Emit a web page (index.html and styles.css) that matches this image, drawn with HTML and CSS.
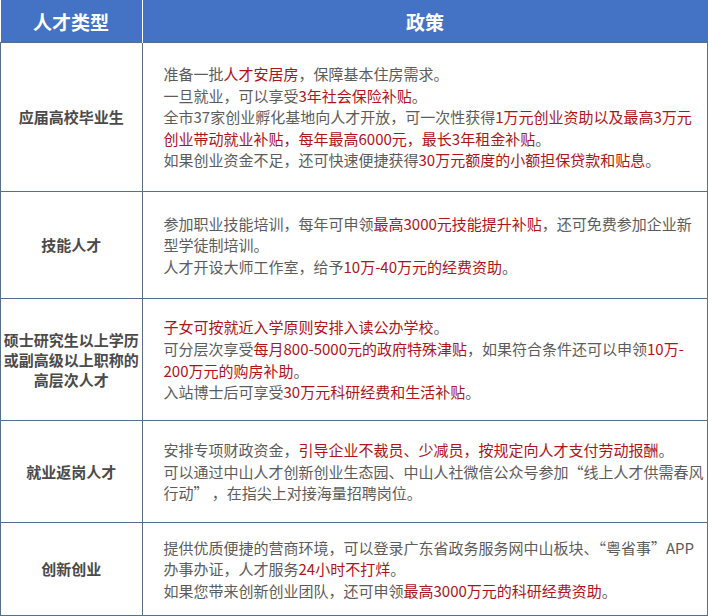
FILE: index.html
```html
<!DOCTYPE html>
<html lang="zh-CN">
<head>
<meta charset="utf-8">
<title>人才政策</title>
<link rel="stylesheet" href="styles.css">
</head>
<body>
<table class="policy">
  <thead>
    <tr class="head-row">
      <th class="head-type">人才类型</th>
      <th class="head-policy">政策</th>
    </tr>
  </thead>
  <tbody>
    <tr class="row-1">
      <td class="type">应届高校毕业生</td>
      <td class="desc">
        <div class="line">准备一批<em>人才安居房</em>，保障基本住房需求。</div>
        <div class="line">一旦就业，可以享受<em>3年社会保险补贴</em>。</div>
        <div class="line">全市37家创业孵化基地向人才开放，可一次性获得<em>1万元创业资助以及最高3万元</em></div>
        <div class="line"><em>创业带动就业补贴，每年最高6000元，最长3年租金补贴</em>。</div>
        <div class="line">如果创业资金不足，还可快速便捷获得<em>30万元额度的小额担保贷款和贴息</em>。</div>
      </td>
    </tr>
    <tr class="row-2">
      <td class="type">技能人才</td>
      <td class="desc">
        <div class="line">参加职业技能培训，每年可申领<em>最高3000元技能提升补贴</em>，还可免费参加企业新</div>
        <div class="line">型学徒制培训。</div>
        <div class="line">人才开设大师工作室，给予<em>10万-40万元的经费资助</em>。</div>
      </td>
    </tr>
    <tr class="row-3">
      <td class="type type-multi">硕士研究生以上学历<br>或副高级以上职称的<br>高层次人才</td>
      <td class="desc">
        <div class="line"><em>子女可按就近入学原则安排入读公办学校</em>。</div>
        <div class="line">可分层次享受<em>每月800-5000元的政府特殊津贴</em>，如果符合条件还可以申领<em>10万-</em></div>
        <div class="line"><em>200万元的购房补助</em>。</div>
        <div class="line">入站博士后可享受<em>30万元科研经费和生活补贴</em>。</div>
      </td>
    </tr>
    <tr class="row-4">
      <td class="type">就业返岗人才</td>
      <td class="desc">
        <div class="line">安排专项财政资金，<em>引导企业不裁员、少减员，按规定向人才支付劳动报酬</em>。</div>
        <div class="line">可以通过中山人才创新创业生态园、中山人社微信公众号参加“线上人才供需春风</div>
        <div class="line">行动” ，在指尖上对接海量招聘岗位。</div>
      </td>
    </tr>
    <tr class="row-5">
      <td class="type">创新创业</td>
      <td class="desc">
        <div class="line">提供优质便捷的营商环境，可以登录广东省政务服务网中山板块、“粤省事”APP</div>
        <div class="line">办事办证，人才服务<em>24小时不打烊</em>。</div>
        <div class="line">如果您带来创新创业团队，还可申领<em>最高3000万元的科研经费资助</em>。</div>
      </td>
    </tr>
  </tbody>
</table>
</body>
</html>
```

FILE: styles.css
```css
html, body {
  margin: 0;
  padding: 0;
  background: #ffffff;
}

body {
  font-family: "Noto Sans CJK SC", "Noto Sans", sans-serif;
}

.policy {
  width: 708px;
  border-collapse: collapse;
  table-layout: fixed;
}

.head-row th {
  height: 42px;
  padding: 0;
  background: #4472c4;
  color: #ffffff;
  font-size: 19px;
  font-weight: bold;
  text-align: center;
  vertical-align: middle;
  border: none;
}

.head-type {
  width: 141px;
  border-right: 1px solid #ffffff !important;
}

.policy td {
  border: 1px solid #56708c;
  vertical-align: middle;
  padding: 0;
}

.type {
  text-align: center;
  font-size: 15px;
  font-weight: bold;
  color: #4a4a4a;
  line-height: 20px;
}

.desc {
  padding-left: 21px !important;
  font-size: 15px;
  color: #5c5c5c;
  line-height: 21.6px;
}

.line {
  white-space: nowrap;
}

.desc em {
  font-style: normal;
  color: #ad141c;
}

.row-1 td { height: 148px; }
.row-2 td { height: 106px; }
.row-3 td { height: 121px; }
.row-4 td { height: 101px; }
.row-5 td { height: 92px; }
```
